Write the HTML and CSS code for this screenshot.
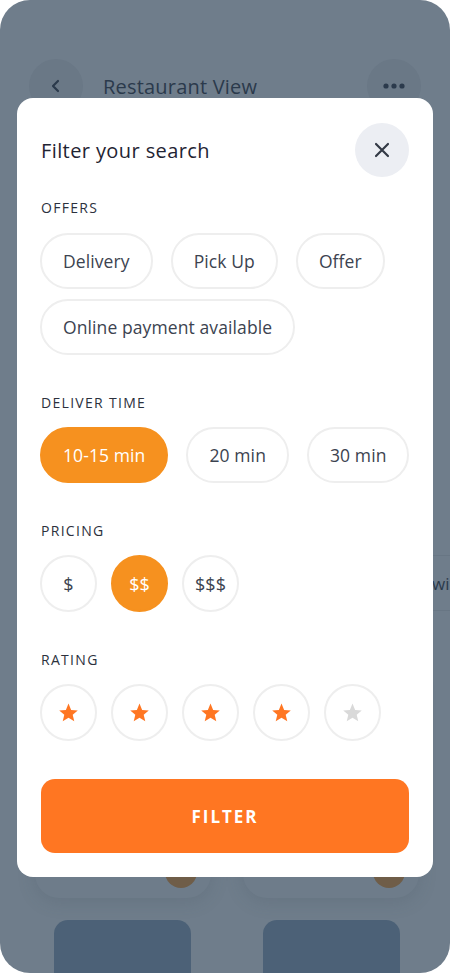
FILE: index.html
```html
<!DOCTYPE html>
<html lang="en">
<head>
<meta charset="utf-8">
<title>Filter your search</title>
<link rel="stylesheet" href="styles.css">
</head>
<body>
<div class="screen">
  <div class="app">
    <header class="app-header">
      <button class="round-btn" aria-label="Back">
        <svg width="14" height="14" viewBox="0 0 14 14"><path d="M9 2 L4 7 L9 12" fill="none" stroke="#2b3a4c" stroke-width="2.2" stroke-linecap="round" stroke-linejoin="round"/></svg>
      </button>
      <h1 class="app-title">Restaurant View</h1>
      <button class="round-btn" aria-label="More">
        <svg width="22" height="6" viewBox="0 0 22 6"><circle cx="3" cy="3" r="2.6" fill="#2b3a4c"/><circle cx="11" cy="3" r="2.6" fill="#2b3a4c"/><circle cx="19" cy="3" r="2.6" fill="#2b3a4c"/></svg>
      </button>
    </header>
    <div class="app-tabs">
      <span class="app-tab">wi</span>
    </div>
    <div class="app-cards">
      <div class="app-card"><span class="app-dot"></span></div>
      <div class="app-card"><span class="app-dot"></span></div>
    </div>
    <div class="app-thumbs">
      <div class="app-thumb"></div>
      <div class="app-thumb"></div>
    </div>
  </div>

  <div class="modal">
    <div class="modal-head">
      <h2 class="modal-title">Filter your search</h2>
      <button class="close-btn" aria-label="Close">
        <svg width="16" height="16" viewBox="0 0 16 16"><path d="M2 2 L14 14 M14 2 L2 14" stroke="#343a46" stroke-width="2.2" stroke-linecap="round"/></svg>
      </button>
    </div>

    <section class="group group-first">
      <h3 class="group-label">OFFERS</h3>
      <div class="chips">
        <span class="chip">Delivery</span>
        <span class="chip">Pick Up</span>
        <span class="chip">Offer</span>
        <span class="chip">Online payment available</span>
      </div>
    </section>

    <section class="group">
      <h3 class="group-label">DELIVER TIME</h3>
      <div class="chips chips-nowrap">
        <span class="chip chip-active">10-15 min</span>
        <span class="chip">20 min</span>
        <span class="chip">30 min</span>
      </div>
    </section>

    <section class="group">
      <h3 class="group-label">PRICING</h3>
      <div class="circles">
        <span class="circle">$</span>
        <span class="circle circle-active">$$</span>
        <span class="circle">$$$</span>
      </div>
    </section>

    <section class="group">
      <h3 class="group-label">RATING</h3>
      <div class="circles">
        <span class="circle"><svg class="star" viewBox="0 0 24 24"><path d="M12 1.8l3 7.2 7.6.6-5.8 5 1.8 7.5L12 18l-6.6 4.1 1.8-7.5-5.8-5 7.6-.6z"/></svg></span>
        <span class="circle"><svg class="star" viewBox="0 0 24 24"><path d="M12 1.8l3 7.2 7.6.6-5.8 5 1.8 7.5L12 18l-6.6 4.1 1.8-7.5-5.8-5 7.6-.6z"/></svg></span>
        <span class="circle"><svg class="star" viewBox="0 0 24 24"><path d="M12 1.8l3 7.2 7.6.6-5.8 5 1.8 7.5L12 18l-6.6 4.1 1.8-7.5-5.8-5 7.6-.6z"/></svg></span>
        <span class="circle"><svg class="star" viewBox="0 0 24 24"><path d="M12 1.8l3 7.2 7.6.6-5.8 5 1.8 7.5L12 18l-6.6 4.1 1.8-7.5-5.8-5 7.6-.6z"/></svg></span>
        <span class="circle"><svg class="star star-off" viewBox="0 0 24 24"><path d="M12 1.8l3 7.2 7.6.6-5.8 5 1.8 7.5L12 18l-6.6 4.1 1.8-7.5-5.8-5 7.6-.6z"/></svg></span>
      </div>
    </section>

    <button class="filter-btn">FILTER</button>
  </div>
</div>
</body>
</html>
```

FILE: styles.css
```css
* { box-sizing: border-box; }
html, body { margin: 0; padding: 0; }
body {
  background: #ffffff;
  font-family: "Open Sans", "Noto Sans", sans-serif;
  width: 450px;
  height: 975px;
  overflow: hidden;
}
button { font-family: inherit; border: 0; padding: 0; cursor: pointer; }
h1, h2, h3 { margin: 0; font-weight: normal; }

.screen {
  position: relative;
  width: 450px;
  height: 973px;
  border-radius: 30px;
  overflow: hidden;
  background: #6f7d8b;
}

/* background app (dimmed) */
.app { display: flex; flex-direction: column; }
.app-header {
  display: flex;
  align-items: center;
  padding: 59px 29px 0 29px;
}
.round-btn {
  width: 54px; height: 54px;
  border-radius: 50%;
  background: #6a7886;
  display: flex; align-items: center; justify-content: center;
}
.app-title {
  flex: 1;
  margin-left: 20px;
  font-size: 20px;
  color: #2b3a4c;
  letter-spacing: 0.2px;
}
.app-tabs {
  display: flex;
  justify-content: flex-end;
  margin-top: 442px;
  height: 56px;
}
.app-tab {
  display: flex; align-items: center;
  width: 18px;
  overflow: hidden;
  font-size: 17px;
  color: #2b3a4c;
  white-space: nowrap;
  border-top: 1px solid #687684;
  border-bottom: 1px solid #687684;
}
.app-cards {
  display: grid;
  grid-template-columns: 176px 176px;
  gap: 32px;
  padding: 0 0 0 35px;
  margin-top: 55px;
}
.app-card {
  height: 232px;
  border-radius: 24px;
  background: #6e7c8a;
  box-shadow: 0 4px 18px rgba(60, 75, 90, 0.18);
  display: flex; align-items: flex-end; justify-content: flex-end;
  padding: 0 14px 10px 0;
}
.app-dot {
  width: 32px; height: 32px; border-radius: 50%;
  background: #6f5d48;
}
.app-thumbs {
  display: grid;
  grid-template-columns: 137px 137px;
  gap: 72px;
  padding-left: 54px;
  margin-top: 22px;
}
.app-thumb {
  height: 80px;
  border-radius: 14px;
  background: #4c6177;
}

/* modal */
.modal {
  position: absolute;
  left: 17px; top: 98px;
  width: 416px;
  height: 779px;
  background: #ffffff;
  border-radius: 16px;
  padding: 25px 24px 24px 23px;
  display: flex; flex-direction: column;
}
.modal-head {
  display: flex; align-items: center; justify-content: space-between;
  height: 54px;
  padding-left: 1px;
  flex-shrink: 0;
}
.modal-title {
  font-size: 20px;
  color: #1f2433;
  letter-spacing: 0.4px;
}
.close-btn {
  width: 54px; height: 54px; border-radius: 50%;
  background: #eceef3;
  display: flex; align-items: center; justify-content: center;
}
.group { margin-top: 39px; flex-shrink: 0; }
.group-first { margin-top: 22px; }
.group-label {
  font-size: 14px;
  line-height: 18px;
  letter-spacing: 1.3px;
  color: #2c313d;
  margin-bottom: 15px;
  padding-left: 1px;
}
.group-first .group-label { margin-bottom: 16px; }
.chips {
  display: flex; flex-wrap: wrap;
  column-gap: 18px; row-gap: 10px;
}
.chips-nowrap { flex-wrap: nowrap; }
.chip {
  flex-shrink: 0;
  height: 56px;
  display: inline-flex; align-items: center;
  padding: 0 21px;
  border: 2px solid #eeeeee;
  border-radius: 28px;
  font-size: 17.5px;
  letter-spacing: 0.1px;
  color: #3c4350;
  white-space: nowrap;
}
.chip-active {
  background: #f6911f;
  border-color: #f6911f;
  color: #ffffff;
}
.circles { display: flex; gap: 14px; }
.circle {
  flex-shrink: 0;
  width: 57px; height: 57px; border-radius: 50%;
  border: 2px solid #eeeeee;
  display: flex; align-items: center; justify-content: center;
  font-size: 18px;
  color: #3c4350;
}
.circle-active {
  background: #f6911f; border-color: #f6911f; color: #ffffff;
}
.star { width: 21px; height: 21px; fill: #ff7622; }
.star-off { fill: #d9d9d9; }

.filter-btn {
  flex-shrink: 0;
  margin-top: auto;
  height: 74px;
  width: calc(100% - 1px);
  margin-left: 1px;
  border-radius: 14px;
  background: #ff7622;
  color: #ffffff;
  font-size: 17px;
  font-weight: 700;
  letter-spacing: 2px;
}
```
